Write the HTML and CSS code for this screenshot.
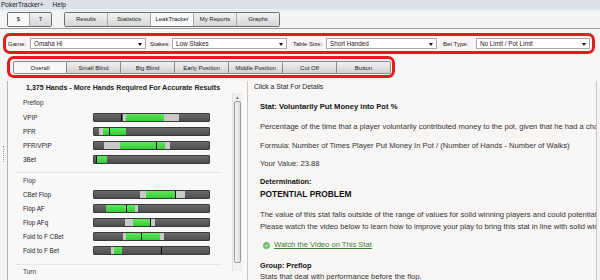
FILE: index.html
```html
<!DOCTYPE html>
<html lang="en">
<head>
  <meta charset="UTF-8">
  <title>PokerTracker+ LeakTracker</title>
  <link rel="stylesheet" href="styles.css">
</head>
<body>
  <div class="menubar">
    <span>PokerTracker+</span>
    <span>Help</span>
  </div>
  <div class="menustripe"></div>

  <div class="toolbar">
    <div class="btn-group">
      <span class="tb tb-sm on">$</span>
      <span class="tb tb-sm">T</span>
    </div>
    <div class="btn-group">
      <span class="tb">Results</span>
      <span class="tb">Statistics</span>
      <span class="tb on">LeakTracker</span>
      <span class="tb">My Reports</span>
      <span class="tb">Graphs</span>
    </div>
  </div>

  <div class="frame">
    <div class="filters hl">
      <label class="lbl lbl-game">Game:</label>
      <div class="select w-game">Omaha Hi<i class="caret"></i></div>
      <label class="lbl lbl-stakes">Stakes:</label>
      <div class="select w-stakes">Low Stakes<i class="caret"></i></div>
      <label class="lbl lbl-table">Table Size:</label>
      <div class="select w-table">Short Handed<i class="caret"></i></div>
      <label class="lbl lbl-bet">Bet Type:</label>
      <div class="select w-bet">No Limit / Pot Limit<i class="caret"></i></div>
    </div>

    <div class="tabs hl">
      <span class="tab on">Overall</span>
      <span class="tab">Small Blind</span>
      <span class="tab">Big Blind</span>
      <span class="tab">Early Position</span>
      <span class="tab">Middle Position</span>
      <span class="tab">Cut Off</span>
      <span class="tab">Button</span>
    </div>

    <div class="workspace">
      <div class="grip"><span class="dots"></span></div>
      <div class="main">
        <div class="stats">
          <div class="stats-title">1,375 Hands - More Hands Required For Accurate Results</div>
          <div class="stats-list">
            <div class="stats-body">
              <div class="section first">Preflop</div>
              <!-- each bar: light range, green range, marker (percent of width) -->
              <div class="row"><span class="name">VPIP</span>
                <div class="bar">
                  <i class="lt" style="left:25%;width:49%"></i>
                  <i class="gr" style="left:28%;width:33%"></i>
                  <i class="mk" style="left:23.5%"></i>
                </div>
              </div>
              <div class="row"><span class="name">PFR</span>
                <div class="bar">
                  <i class="lt" style="left:4%;width:5%"></i>
                  <i class="gr" style="left:8%;width:20%"></i>
                  <i class="mk" style="left:13%"></i>
                </div>
              </div>
              <div class="row"><span class="name">PFR/VPIP</span>
                <div class="bar">
                  <i class="lt" style="left:9%;width:57%"></i>
                  <i class="gr" style="left:23%;width:39%"></i>
                  <i class="mk" style="left:54%"></i>
                </div>
              </div>
              <div class="row"><span class="name">3Bet</span>
                <div class="bar">
                  <i class="gr" style="left:3%;width:8%"></i>
                  <i class="mk" style="left:2%"></i>
                </div>
              </div>

              <div class="section">Flop</div>
              <div class="row"><span class="name">CBet Flop</span>
                <div class="bar">
                  <i class="lt" style="left:40%;width:39%"></i>
                  <i class="gr" style="left:45%;width:26%"></i>
                  <i class="mk" style="left:70%"></i>
                </div>
              </div>
              <div class="row"><span class="name">Flop AF</span>
                <div class="bar">
                  <i class="lt" style="left:10%;width:28%"></i>
                  <i class="gr" style="left:10%;width:26%"></i>
                  <i class="mk" style="left:28%"></i>
                </div>
              </div>
              <div class="row"><span class="name">Flop AFq</span>
                <div class="bar">
                  <i class="lt" style="left:27%;width:26%"></i>
                  <i class="gr" style="left:34%;width:16%"></i>
                  <i class="mk" style="left:49%"></i>
                </div>
              </div>
              <div class="row"><span class="name">Fold to F CBet</span>
                <div class="bar">
                  <i class="lt" style="left:25%;width:36%"></i>
                  <i class="gr" style="left:28%;width:29%"></i>
                  <i class="mk" style="left:41%"></i>
                </div>
              </div>
              <div class="row"><span class="name">Fold to F Bet</span>
                <div class="bar">
                  <i class="lt" style="left:15%;width:9%"></i>
                  <i class="gr" style="left:17%;width:7%"></i>
                  <i class="mk" style="left:58%"></i>
                </div>
              </div>

              <div class="section turn">Turn</div>
            </div>
            <div class="scrollbar">
              <span class="arrow">&#9652;</span>
              <div class="thumb"></div>
            </div>
          </div>
        </div>

        <div class="details">
          <div class="hint">Click a Stat For Details</div>
          <div class="doc">
            <p class="b stat">Stat: Voluntarily Put Money into Pot %</p>
            <p class="pct">Percentage of the time that a player voluntarily contributed money to the pot, given that he had a chance to do so.</p>
            <p class="formula">Formula: Number of Times Player Put Money In Pot / (Number of Hands - Number of Walks)</p>
            <p class="value">Your Value: 23.88</p>
            <p class="b det">Determination:</p>
            <p class="verdict">POTENTIAL PROBLEM</p>
            <p class="para">The value of this stat falls outside of the range of values for solid winning players and could potentially be a leak.<br>
            Please watch the video below to learn how to improve your play to bring this stat in line with solid winning players.</p>
            <p class="video">
              <svg class="play" viewBox="0 0 10 10" width="7" height="7">
                <circle cx="5" cy="5" r="5" fill="#6cc06c"/>
                <path d="M3 5.2 L4.6 6.8 L7.2 3.6" fill="none" stroke="#fff" stroke-width="1.4"/>
              </svg>
              <a href="#">Watch the Video on This Stat</a>
            </p>
            <p class="b grp">Group: Preflop</p>
            <p class="last">Stats that deal with performance before the flop.</p>
          </div>
        </div>
      </div>
    </div>
  </div>
</body>
</html>
```

FILE: styles.css
```css
html, body {
  margin: 0;
  padding: 0;
  height: 100%;
  overflow: hidden;
  background: #f6f4f4;
  font-family: "Liberation Sans", Arial, sans-serif;
  color: #222;
}

.menubar {
  height: 9px;
  background: #dde0e6;
  font-size: 6.5px;
  line-height: 9px;
  padding-left: 1px;
  display: flex;
  gap: 9px;
}

.menustripe {
  height: 2px;
  background: #e6edf7;
}

.toolbar {
  height: 17px;
  background: #f4f4f4;
  border-bottom: 1px solid #9c9c9c;
  display: flex;
  align-items: center;
  gap: 12px;
  padding-left: 7px;
}

.btn-group {
  display: flex;
  border: 1px solid #6f6f6f;
  border-radius: 2px;
  height: 13px;
}

.tb {
  width: 42px;
  font-size: 6px;
  line-height: 13px;
  text-align: center;
  background: linear-gradient(#f2f2f2, #d6d6d6);
  border-left: 1px solid #a8a8a8;
}

.tb:first-child { border-left: none; }

.tb-sm { width: 21px; }

.tb.on { background: #f8f8f8; }

.frame {
  padding-top: 4px;
}

.hl {
  border: 3px solid #e31b1b;
  border-radius: 7px;
  box-sizing: border-box;
}

.filters {
  margin: 0 5px 0 3px;
  height: 21px;
  display: flex;
  align-items: center;
  padding-left: 2px;
}

.lbl {
  font-size: 6px;
  flex: none;
}

.lbl-game { width: 22px; }
.lbl-stakes { width: 22px; }
.lbl-table { width: 33px; padding-left: 2px; }
.lbl-bet { width: 33px; padding-left: 2px; }

.select {
  position: relative;
  flex: none;
  height: 11px;
  background: #fff;
  border: 1px solid #a9a9a9;
  font-size: 6.3px;
  line-height: 10px;
  padding-left: 3px;
  box-sizing: border-box;
  margin-right: 4px;
}

.caret {
  position: absolute;
  right: 3px;
  top: 4px;
  border-left: 2px solid transparent;
  border-right: 2px solid transparent;
  border-top: 3px solid #111;
}

.w-game { width: 116px; }
.w-stakes { width: 115px; }
.w-table { width: 111px; }
.w-bet { width: 114px; }

.tabs {
  margin: 2px 0 0 7px;
  width: 388px;
  height: 22px;
  display: flex;
  align-items: center;
  padding-left: 3px;
}

.tab {
  width: 54px;
  height: 13px;
  font-size: 6px;
  line-height: 13px;
  text-align: center;
  background: linear-gradient(#f0f0f0, #d2d2d2);
  border: 1px solid #8a8a8a;
  border-left: none;
  box-sizing: border-box;
}

.tab:first-child {
  border-left: 1px solid #8a8a8a;
  border-radius: 2px 0 0 2px;
}

.tab:last-child { border-radius: 0 2px 2px 0; }

.tab.on { background: #f7f7f7; }

.workspace {
  display: flex;
  margin: 3px 3px 0 0;
  height: 200px;
}

.grip {
  flex: none;
  width: 7px;
  display: flex;
  align-items: center;
  padding-bottom: 55px;
  box-sizing: border-box;
}

.dots {
  margin-left: 3px;
  height: 16px;
  border-left: 1px dotted #9a9a9a;
}

.main {
  flex: 1;
  min-width: 0;
  display: flex;
  border-left: 1px solid #b4b4b4;
  border-right: 1px solid #c4c4c4;
}

.stats {
  flex: none;
  width: 239px;
  border-right: 1px solid #c8c8c8;
  background: #f8f8f8;
}

.stats-title {
  font-size: 7.1px;
  font-weight: bold;
  line-height: 10px;
  padding: 2px 0 0 18px;
}

.stats-list {
  display: flex;
  padding-left: 8px;
}

.stats-body {
  width: 216px;
}

.section {
  font-size: 6.5px;
  line-height: 9px;
  color: #333;
  border-top: 1px solid #e4e4e4;
  padding: 2.5px 0 2.5px 7px;
  margin-top: 6px;
  margin-right: 10px;
}

.section.first {
  border-top-color: transparent;
  margin-top: 0;
  padding: 4px 0 3px 7px;
}

.section.turn {
  margin-top: 7px;
  padding-top: 1.5px;
}

.row {
  display: flex;
  align-items: center;
  height: 14px;
}

.name {
  flex: none;
  width: 70px;
  padding-left: 7px;
  font-size: 6.3px;
}

.bar {
  position: relative;
  flex: none;
  width: 117px;
  height: 9px;
  box-sizing: border-box;
  background: linear-gradient(#6a6a6a, #4e4e4e);
  border: 1px solid #3a3a3a;
  border-radius: 1px;
  overflow: hidden;
}

.bar i {
  position: absolute;
  top: 0;
  bottom: 0;
}

.bar .lt { background: #c9c9c9; }
.bar .gr { background: linear-gradient(#5ee85e, #35cc35); }
.bar .mk {
  width: 1px;
  background: #000;
}

.scrollbar {
  width: 9px;
  background: #f0f0f0;
  border-left: 1px solid #e2e2e2;
  display: flex;
  flex-direction: column;
  align-items: center;
  height: 178px;
}

.arrow {
  font-size: 5px;
  line-height: 8px;
  color: #555;
}

.thumb {
  width: 7px;
  flex: 1;
  margin-bottom: 8px;
  background: linear-gradient(90deg, #f4f4f4, #dcdcdc);
  border: 1px solid #9a9a9a;
  border-radius: 2px;
  box-sizing: border-box;
}

.details {
  flex: 1;
  min-width: 0;
  background: #f8f5f5;
  overflow: hidden;
  white-space: nowrap;
}

.hint {
  font-size: 6.8px;
  line-height: 10px;
  padding: 1px 0 0 6px;
  height: 10px;
}

.doc {
  padding: 10px 0 0 12px;
  font-size: 7.6px;
  color: #333;
}

.doc p {
  margin: 0;
  line-height: 10px;
}

.doc .b {
  font-weight: bold;
  font-size: 7.3px;
  color: #111;
}

.doc .stat { font-size: 7.6px; margin-bottom: 10px; }
.doc .pct { margin-bottom: 9px; }
.doc .formula { margin-bottom: 8px; }
.doc .value { margin-bottom: 8px; }
.doc .det { margin-bottom: 2px; }

.doc .verdict {
  font-size: 8.4px;
  font-weight: bold;
  color: #111;
  margin-bottom: 10px;
}

.doc .para {
  line-height: 12px;
  margin-bottom: 7px;
}

.doc .video {
  display: flex;
  align-items: center;
  gap: 4px;
  padding-left: 3px;
  margin-bottom: 11px;
}

.doc .video a {
  color: #3a7d3a;
}

.doc .grp { margin-bottom: 1px; }
```
